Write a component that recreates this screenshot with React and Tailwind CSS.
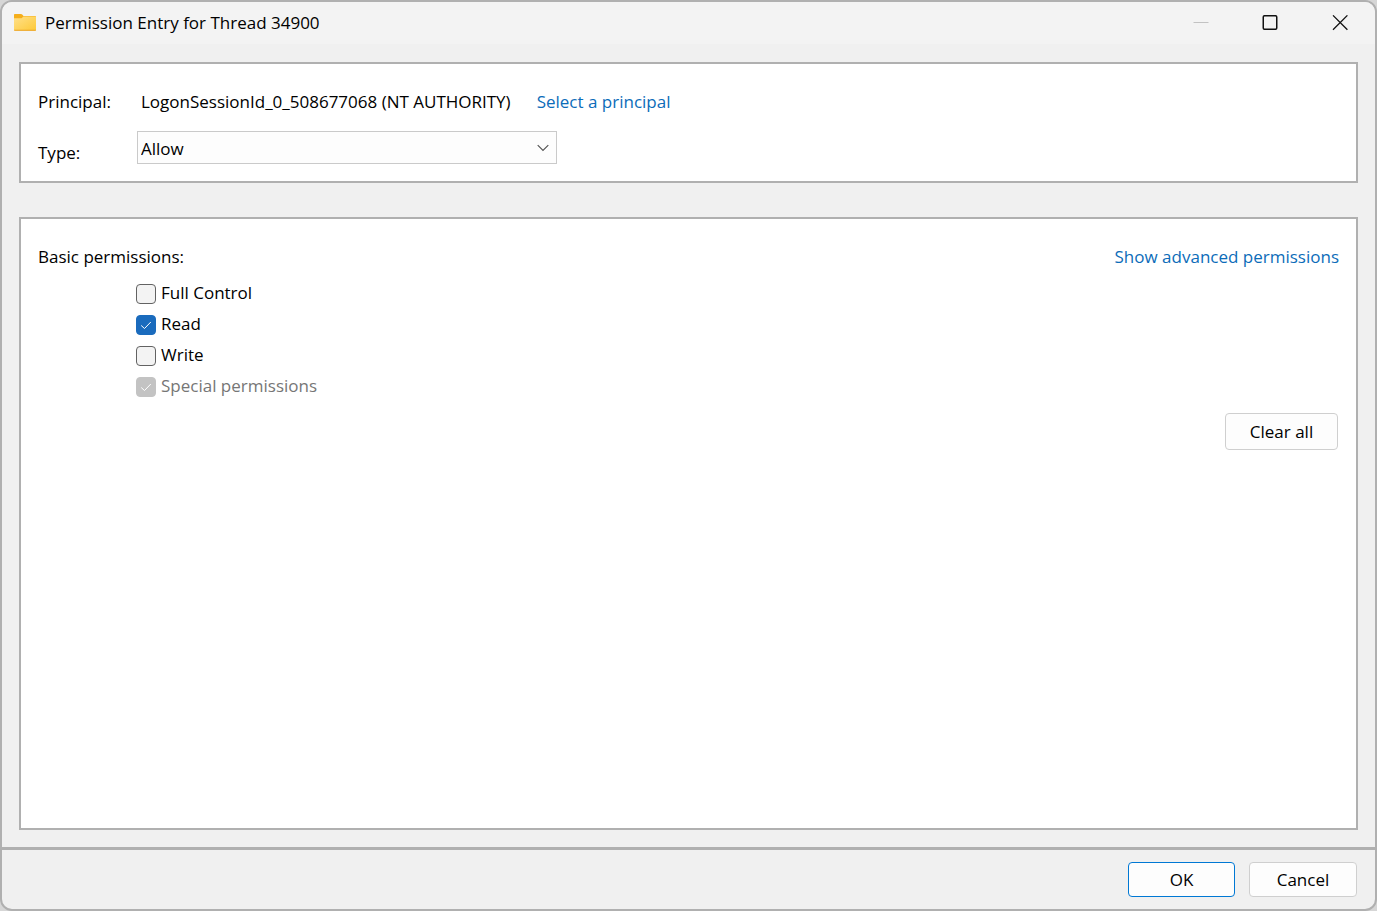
import React, { useState } from 'react';

const BASIC_PERMISSIONS = [
  { id: 'full', label: 'Full Control' },
  { id: 'read', label: 'Read' },
  { id: 'write', label: 'Write' },
  { id: 'special', label: 'Special permissions', disabled: true },
];

const FolderIcon = () => (
  <svg width="22" height="18" viewBox="0 0 22 18" aria-hidden="true">
    <defs>
      <linearGradient id="folder" x1="0" y1="0" x2="1" y2="1">
        <stop offset="0" stopColor="#ffe08a" />
        <stop offset="1" stopColor="#fdc937" />
      </linearGradient>
    </defs>
    <path d="M0 .8Q0 0 .8 0H7q.7 0 1.200.5L9.500 2H21q1 0 1 1V8H0z" fill="#f5ae1b" />
    <path d="M0 4.300H7.500L9.500 2.500H21q1 0 1 .8V16q0 .7-.8.7H.8q-.8 0-.8-.7z" fill="url(#folder)" />
    <path d="M0 15.700H22q0 1-.8 1H.8q-.8 0-.8-1z" fill="#eba42a" />
  </svg>
);

const TitleBar = () => (
  <header className="flex h-[42px] items-center bg-[#f3f3f3] pl-3">
    <FolderIcon />
    <h1 className="ml-[9px] grow text-[17px] leading-6">Permission Entry for Thread 34900</h1>
    <button type="button" aria-label="Minimize" disabled className="flex h-full w-[69px] items-center justify-center">
      <svg width="16" height="16" viewBox="0 0 16 16" fill="none" stroke="#c2c2c2">
        <path d="M0.500 7.500H15.500" />
      </svg>
    </button>
    <button type="button" aria-label="Maximize" className="flex h-full w-[70px] items-center justify-center">
      <svg width="16" height="16" viewBox="0 0 16 16" fill="none" stroke="#111" strokeWidth="1.500">
        <rect x="1.250" y="0.750" width="13.500" height="13.500" rx="1.200" />
      </svg>
    </button>
    <button type="button" aria-label="Close" className="flex h-full w-[70px] items-center justify-center">
      <svg width="16" height="16" viewBox="0 0 16 16" fill="none" stroke="#111" strokeWidth="1.300">
        <path d="M1 .4l14.400 14.400M15.400.4L1 14.800" />
      </svg>
    </button>
  </header>
);

const PermissionCheckbox = ({ id, label, checked, disabled, onChange }) => (
  <li className="flex h-[31px] items-center gap-[5px]">
    <span className="grid place-items-center pt-[3px]">
      <input
        id={id}
        type="checkbox"
        checked={checked}
        disabled={disabled}
        onChange={onChange}
        className="col-start-1 row-start-1 size-5 appearance-none rounded-[4px] border border-[#626262] bg-[#f3f3f3] checked:border-[#1a6bbd] checked:bg-[#1a6bbd] disabled:border-[#c3c3c3] disabled:bg-[#c3c3c3]"
      />
      {checked && (
        <svg
          width="12"
          height="12"
          viewBox="0 0 12 12"
          fill="none"
          stroke="#fff"
          className="pointer-events-none col-start-1 row-start-1"
        >
          <path d="M1.200 6.500L4.500 9.500L10.800 3" />
        </svg>
      )}
    </span>
    <label htmlFor={id} className={disabled ? 'text-[#767676]' : ''}>
      {label}
    </label>
  </li>
);

const App = () => {
  const [type, setType] = useState('Allow');
  const [granted, setGranted] = useState(['read', 'special']);

  const toggle = (id) => {
    setGranted((prev) => (prev.includes(id) ? prev.filter((p) => p !== id) : [...prev, id]));
  };

  return (
    <div className="min-h-screen flex bg-[#d6d6d6] font-['Open_Sans','Noto_Sans',sans-serif] text-[17px] leading-6 text-black">
      <div className="flex grow flex-col overflow-hidden rounded-xl border-2 border-[#b0b0b0] bg-[#f0f0f0]">
        <TitleBar />

        <main className="flex grow flex-col gap-[34px] px-[17px] pt-[18px] pb-[17px]">
          <section className="grid grid-cols-[99px_1fr] border-2 border-[#b0b0b0] bg-white px-[17px] pt-[26px] pb-4">
            <span>Principal:</span>
            <div className="flex gap-[26px] pl-1">
              <span>LogonSessionId_0_508677068 (NT AUTHORITY)</span>
              <a href="#principal" className="text-[#0c6cb9]">
                Select a principal
              </a>
            </div>
            <label htmlFor="type" className="pt-[27px]">
              Type:
            </label>
            <div className="grid w-[420px] items-center self-start pt-[17px]">
              <select
                id="type"
                value={type}
                onChange={(e) => setType(e.target.value)}
                className="col-start-1 row-start-1 h-[33px] w-full appearance-none border border-[#cacaca] bg-[#fdfdfd] px-[3px] pt-[2px]"
              >
                <option>Allow</option>
                <option>Deny</option>
              </select>
              <svg
                width="12"
                height="8"
                viewBox="0 0 12 8"
                fill="none"
                stroke="#555"
                strokeWidth="1.200"
                className="pointer-events-none col-start-1 row-start-1 mr-2 justify-self-end"
              >
                <path d="M.7 1.200L6 6.500L11.300 1.200" />
              </svg>
            </div>
          </section>

          <section className="grow border-2 border-[#b0b0b0] bg-white px-[17px] pt-[26px]">
            <div className="flex justify-between">
              <h2>Basic permissions:</h2>
              <a href="#advanced" className="text-[#0c6cb9]">
                Show advanced permissions
              </a>
            </div>
            <ul className="mt-2 pl-[98px]">
              {BASIC_PERMISSIONS.map((p) => (
                <PermissionCheckbox
                  key={p.id}
                  id={p.id}
                  label={p.label}
                  disabled={p.disabled}
                  checked={granted.includes(p.id)}
                  onChange={() => toggle(p.id)}
                />
              ))}
            </ul>
            <div className="mt-3 flex justify-end pr-px">
              <button
                type="button"
                onClick={() => setGranted(['special'])}
                className="h-[37px] w-[113px] rounded border border-[#cfcfcf] bg-[#fdfdfd]"
              >
                Clear all
              </button>
            </div>
          </section>
        </main>

        <footer className="flex justify-end gap-[14px] border-t-3 border-[#b0b0b0] px-[18px] py-3">
          <button type="button" className="h-[35px] w-[107px] rounded border border-[#0078d4] bg-[#fdfdfd]">
            OK
          </button>
          <button type="button" className="h-[35px] w-[108px] rounded border border-[#cfcfcf] bg-[#fdfdfd]">
            Cancel
          </button>
        </footer>
      </div>
    </div>
  );
};

export default App;
